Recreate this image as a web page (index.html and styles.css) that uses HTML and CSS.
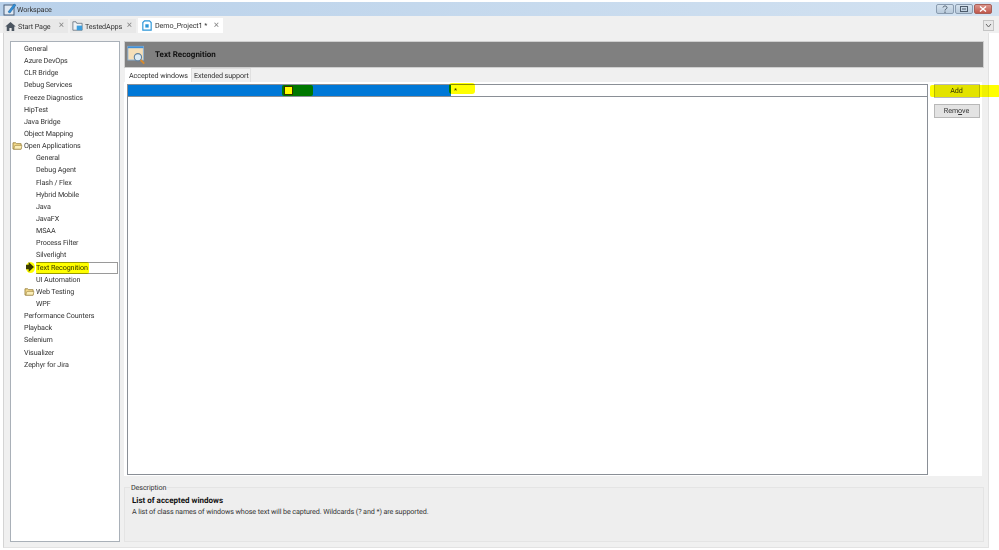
FILE: index.html
```html
<!DOCTYPE HTML>
<html>
	<head>
		<meta charset="utf-8">
		<title>Workspace</title>
		<link rel="stylesheet" href="styles.css">
	</head>
	<body>
		<div class="titlebar">
			<svg class="app-icon" width="14" height="13" viewBox="0 0 14 13"><rect x="1" y="2" width="10" height="10" fill="#dfe8f2" stroke="#4a5f78"/><path d="M5 9 L11 1 L13 2 L7 10 Z" fill="#2f8fd8" stroke="#1d5f96" stroke-width=".5"/></svg>
			<span class="title-text">Workspace</span>
			<div class="win-buttons">
				<div class="win-btn"><svg width="6" height="8" viewBox="0 0 6 8"><path d="M1 2.500C1 .5 5 .5 5 2.500 5 4 3 4 3 5.500M3 6.500v1.500" fill="none" stroke="#4d5b6b"/></svg></div>
				<div class="win-btn"><svg width="8" height="6" viewBox="0 0 8 6"><rect x=".5" y=".5" width="7" height="5" fill="none" stroke="#4d5b6b"/><path d="M2 3h4" stroke="#4d5b6b"/></svg></div>
				<div class="win-btn win-close"><svg width="8" height="6" viewBox="0 0 8 6"><path d="M1 .5l6 5M7 .5l-6 5" stroke="#fff" stroke-width="1.400"/></svg></div>
			</div>
		</div>
		<div class="tabbar">
			<div class="tab tab-start">
				<svg width="11" height="9" viewBox="0 0 14 12"><path d="M7 0 L14 6 L12 6 L12 12 L8.500 12 L8.500 8 L5.500 8 L5.500 12 L2 12 L2 6 L0 6 Z" fill="#4b5560"/></svg>
				<span>Start Page</span><span class="tab-x">&#215;</span>
			</div>
			<div class="tab tab-apps">
				<svg width="11" height="10" viewBox="0 0 14 13"><path d="M1 1h4l1 2h7v9H1z" fill="#eef2f5" stroke="#5d6a76"/><rect x="6" y="6" width="7" height="6" fill="#3b9ede"/></svg>
				<span>TestedApps</span><span class="tab-x">&#215;</span>
			</div>
			<div class="tab tab-active tab-project">
				<svg width="10" height="11" viewBox="0 0 12 13"><path d="M3 1h6l2 2v9H1V3z" fill="#fff" stroke="#2c96d8" stroke-width="1.400"/><path d="M4 5h4v4H4z" fill="#2c96d8"/></svg>
				<span>Demo_Project1 *</span><span class="tab-x">&#215;</span>
			</div>
			<div class="tab-menu"><svg width="7" height="5" viewBox="0 0 7 5"><path d="M1 1l2.500 3L6 1" fill="none" stroke="#666"/></svg></div>
		</div>
		<div class="main">
			<div class="tree">
				<div class="row">General</div>
				<div class="row">Azure DevOps</div>
				<div class="row">CLR Bridge</div>
				<div class="row">Debug Services</div>
				<div class="row">Freeze Diagnostics</div>
				<div class="row">HipTest</div>
				<div class="row">Java Bridge</div>
				<div class="row">Object Mapping</div>
				<div class="row">
					<svg class="folder" width="11" height="9" viewBox="0 0 12 10"><path d="M1 2h3l1 1h5v6H1z" fill="#f3d98b" stroke="#9b8340"/><path d="M2 9l1-4h8l-1 4z" fill="#fbeeb8" stroke="#9b8340" stroke-width=".6"/></svg>
					<span>Open Applications</span>
				</div>
				<div class="row sub">General</div>
				<div class="row sub">Debug Agent</div>
				<div class="row sub">Flash / Flex</div>
				<div class="row sub">Hybrid Mobile</div>
				<div class="row sub">Java</div>
				<div class="row sub">JavaFX</div>
				<div class="row sub">MSAA</div>
				<div class="row sub">Process Filter</div>
				<div class="row sub">Silverlight</div>
				<div class="row sub selected">
					<svg class="arrow" width="8" height="10" viewBox="0 0 9 11"><path d="M0 3h3V0l6 5.500-6 5.500V8H0z" fill="#3c3c14"/></svg>
					<span class="sel-box">Text Recognition</span>
					<div class="hl hl-arrow"></div>
					<div class="hl hl-tree"></div>
				</div>
				<div class="row sub">UI Automation</div>
				<div class="row sub">
					<svg class="folder" width="11" height="9" viewBox="0 0 12 10"><path d="M1 2h3l1 1h5v6H1z" fill="#f3d98b" stroke="#9b8340"/><path d="M2 9l1-4h8l-1 4z" fill="#fbeeb8" stroke="#9b8340" stroke-width=".6"/></svg>
					<span>Web Testing</span>
				</div>
				<div class="row sub">WPF</div>
				<div class="row">Performance Counters</div>
				<div class="row">Playback</div>
				<div class="row">Selenium</div>
				<div class="row">Visualizer</div>
				<div class="row">Zephyr for Jira</div>
			</div>
			<div class="content">
				<div class="header">
					<svg class="header-icon" width="20" height="20" viewBox="0 0 22 21"><rect x="1" y="1" width="17" height="15" fill="#f6dfb8" stroke="#8fb7dc"/><rect x="1" y="1" width="17" height="2" fill="#3f8fd8"/><circle cx="12" cy="13" r="4" fill="#dcebf5" stroke="#5f7f9c" stroke-width="1.200"/><path d="M15 16l4 4" stroke="#d98a2b" stroke-width="2"/></svg>
					<span>Text Recognition</span>
				</div>
				<div class="subtabs">
					<div class="subtab subtab-active">Accepted windows</div>
					<div class="subtab">Extended support</div>
				</div>
				<div class="panel">
					<div class="table">
						<div class="table-row">
							<div class="cell-blue"><div class="check"></div></div>
							<div class="cell-value">*</div>
						</div>
						<div class="hl hl-check"></div>
						<div class="hl hl-value"></div>
					</div>
					<div class="buttons">
						<div class="button">Add</div>
						<div class="button">Rem<u>o</u>ve</div>
						<div class="hl hl-add"></div>
					</div>
				</div>
				<div class="description">
					<div class="desc-label">Description</div>
					<div class="desc-title">List of accepted windows</div>
					<div>A list of class names of windows whose text will be captured. Wildcards (? and *) are supported.</div>
				</div>
			</div>
		</div>
	</body>
</html>
```

FILE: styles.css
```css
html, body {
	margin: 0;
	padding: 0;
}
body {
	width: 999px;
	height: 550px;
	overflow: hidden;
	background: #fff;
	font-family: Roboto, "Liberation Sans", sans-serif;
	font-size: 7.200px;
	letter-spacing: -0.1px;
	white-space: nowrap;
	text-rendering: geometricPrecision;
	color: #333;
	display: flex;
	flex-direction: column;
	filter: blur(0.3px);
}
svg {
	display: block;
	flex: none;
}
.titlebar {
	height: 14px;
	margin-top: 2px;
	background: linear-gradient(90deg, #b9d1ea, #d3e2f1);
	display: flex;
	align-items: center;
	padding-left: 3px;
	flex: none;
}
.win-buttons {
	margin-left: auto;
	margin-right: 7px;
	display: flex;
	gap: 1px;
	align-self: flex-start;
	margin-top: 2px;
}
.win-btn {
	width: 16px;
	height: 8px;
	border: 1px solid #8a9cb0;
	border-radius: 2px;
	background: linear-gradient(#d5e2ee, #b9cadb);
	display: flex;
	align-items: center;
	justify-content: center;
}
.win-close {
	border-color: #a86058;
	background: linear-gradient(#dc958c, #c0574b);
}
.tabbar {
	height: 17px;
	background: #f0f0f0;
	display: flex;
	align-items: flex-end;
	padding-left: 3px;
	gap: 2px;
	flex: none;
	box-sizing: border-box;
}
.tab {
	height: 14px;
	background: #e8e8e8;
	display: flex;
	align-items: center;
	padding-left: 2px;
	gap: 2px;
	box-sizing: border-box;
}
.tab-start { width: 65px; }
.tab-apps { width: 66px; }
.tab-project { width: 85px; }
.tab-active {
	background: #fff;
	height: 15px;
	padding-left: 4px;
	gap: 3px;
}
.tab-x {
	font-size: 10px;
	line-height: 10px;
	color: #888;
	margin-left: auto;
	margin-right: 4px;
}
.tab-menu {
	margin-left: auto;
	margin-right: 5px;
	margin-bottom: 2px;
	width: 9px;
	height: 9px;
	border: 1px solid #c4c4c4;
	background: #e8e8e8;
	display: flex;
	align-items: center;
	justify-content: center;
}
.main {
	flex: 1;
	margin: 0 10px 2px 3px;
	padding: 8px 4px 5px 6px;
	background: #f0f0f0;
	border-left: 1px solid #d4d4d4;
	border-right: 1px solid #e2e2e2;
	border-bottom: 1px solid #e2e2e2;
	display: flex;
	gap: 4px;
	min-height: 0;
}
.tree {
	width: 110px;
	box-sizing: border-box;
	background: #fff;
	border: 1px solid #a9b0b8;
	padding-top: 1px;
	flex: none;
}
.row {
	height: 12.150px;
	line-height: 12.150px;
	padding-left: 13px;
	display: flex;
	align-items: center;
	position: relative;
}
.row.sub {
	padding-left: 25px;
}
.folder {
	position: absolute;
	left: 1px;
	top: 1px;
}
.sub .folder {
	left: 13px;
}
.arrow {
	position: absolute;
	left: 15px;
	top: 0;
}
.sel-box {
	flex: 1;
	margin-right: 1px;
	border: 1px solid #9a9a9a;
	border-left: 0;
	background: #fff;
	line-height: 10px;
}
.hl {
	position: absolute;
	background: #ffff00;
	mix-blend-mode: multiply;
	border-radius: 2px;
}
.hl-tree {
	left: 25px;
	top: 0;
	width: 53px;
	height: 12px;
}
.hl-arrow {
	left: 15px;
	top: 0;
	width: 9px;
	height: 11px;
	border-radius: 50%;
}
.content {
	flex: 1;
	display: flex;
	flex-direction: column;
	min-width: 0;
}
.header {
	height: 27px;
	background: #808080;
	border: 1px solid #cfcfcf;
	display: flex;
	align-items: center;
	padding-left: 2px;
	font-weight: bold;
	font-size: 8px;
	letter-spacing: 0;
	color: #111;
	flex: none;
	box-sizing: border-box;
}
.header span {
	margin-left: 8px;
}
.subtabs {
	display: flex;
	height: 14px;
	flex: none;
	margin-left: 1px;
}
.subtab {
	width: 60px;
	box-sizing: border-box;
	padding-left: 2px;
	display: flex;
	align-items: center;
	background: #f0f0f0;
	border: 1px solid #e0e0e0;
	border-bottom: 0;
}
.subtab-active {
	width: 66px;
	background: #fff;
	border: 0;
	padding-left: 4px;
}
.panel {
	height: 394px;
	margin-right: 2px;
	background: #fff;
	padding: 2px 0 1px 3px;
	display: flex;
	gap: 6px;
	flex: none;
	box-sizing: border-box;
}
.table {
	width: 801px;
	border: 1px solid #8a8f96;
	box-sizing: border-box;
	flex: none;
	position: relative;
}
.table-row {
	height: 11px;
	display: flex;
	border-bottom: 1px solid #8a8f96;
}
.cell-blue {
	width: 323px;
	background: #0078d7;
	position: relative;
}
.check {
	position: absolute;
	left: 156px;
	top: 1px;
	width: 7px;
	height: 7px;
	background: #fff;
	border: 1px solid #333;
}
.cell-value {
	flex: 1;
	padding-left: 3px;
	line-height: 11px;
}
.hl-check {
	left: 154px;
	top: 0;
	width: 31px;
	height: 11px;
}
.hl-value {
	left: 321px;
	top: -2px;
	width: 26px;
	height: 11px;
	border-radius: 3px;
}
.buttons {
	flex: none;
	display: flex;
	flex-direction: column;
	gap: 6px;
	position: relative;
}
.button {
	width: 46px;
	height: 14px;
	padding: 0 1px 1px 0;
	background: #e3e3e3;
	border: 1px solid #b8b8b8;
	box-sizing: border-box;
	display: flex;
	align-items: center;
	justify-content: center;
}
.hl-add {
	left: -4px;
	top: 1px;
	width: 70px;
	height: 12px;
}
.description {
	margin-top: 11px;
	flex: 1;
	position: relative;
	border: 1px solid #e4e4e4;
	background: #eee;
	min-height: 0;
	padding: 8px 0 0 7px;
	line-height: 10.500px;
}
.desc-label {
	position: absolute;
	left: 5px;
	top: -5px;
	padding: 0 1px;
	background: #f0f0f0;
}
.desc-title {
	font-weight: bold;
	font-size: 8px;
	letter-spacing: 0;
	color: #111;
}
```
